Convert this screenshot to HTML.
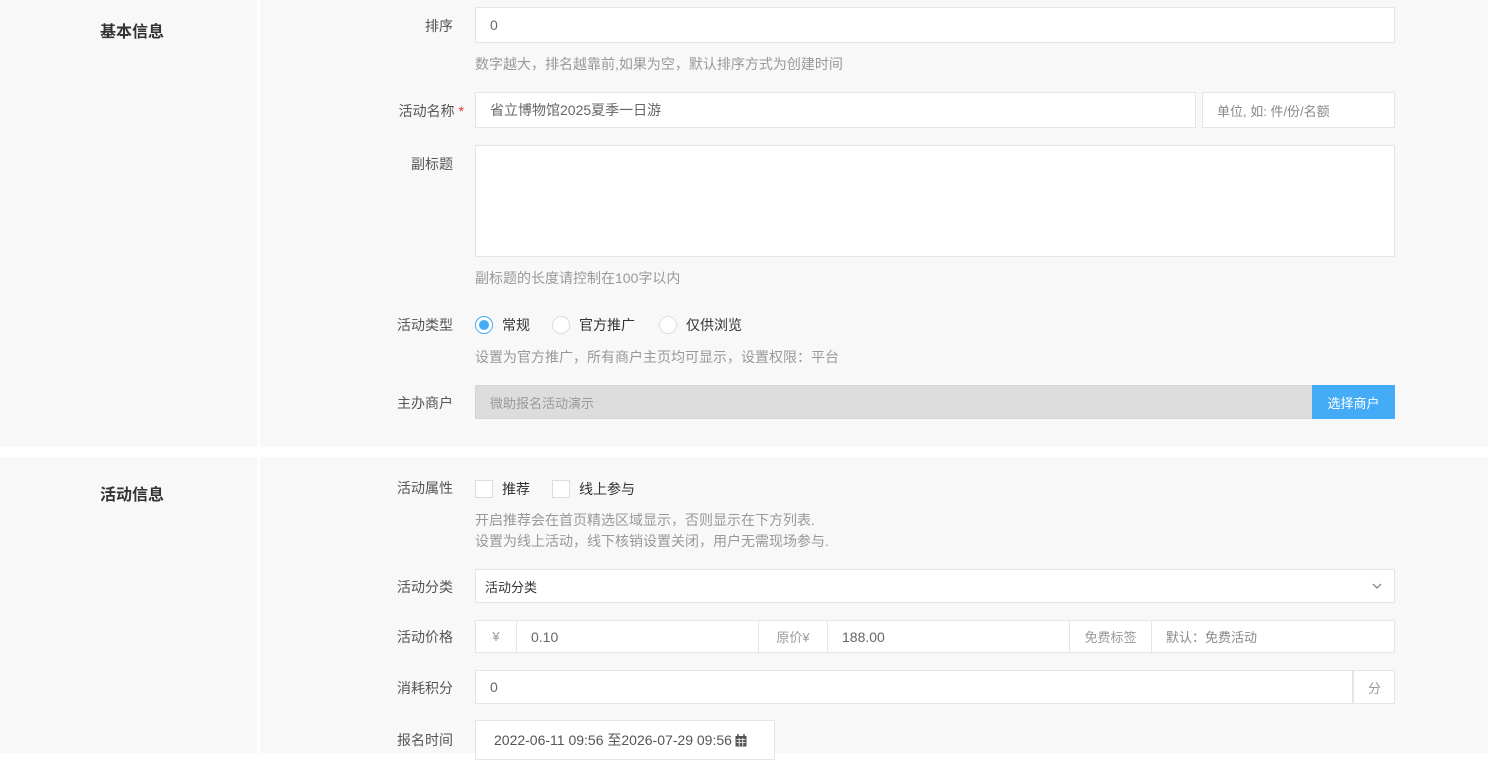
<!DOCTYPE html>
<html><head><meta charset="utf-8"><style>
*{box-sizing:border-box;margin:0;padding:0}
body{width:1488px;height:753px;background:#fff;position:relative;overflow:hidden;font-family:"Liberation Sans","Noto Sans CJK SC",sans-serif;font-size:14px;color:#333}
.a{position:absolute}
.panel{position:absolute;background:#f8f8f8}
.lbl{position:absolute;right:1035px;text-align:right;font-size:14px;color:#555;white-space:nowrap}
.inp{position:absolute;background:#fff;border:1px solid #e5e5e5;color:#666;font-size:14px;padding-left:14px;display:flex;align-items:center}
.help{position:absolute;left:475px;color:#999;font-size:14px;white-space:nowrap}
.h{position:absolute;left:100px;font-size:16px;font-weight:bold;color:#333}
.seg{position:absolute;top:0;height:100%;border-right:1px solid #e5e5e5;display:flex;align-items:center;justify-content:center;color:#999;font-size:13px}
.radio{position:absolute;width:18px;height:18px;border:1px solid #ddd;border-radius:50%;background:#fff}
.cb{position:absolute;width:18px;height:18px;border:1px solid #ddd;background:#fff}
</style></head><body>
<div class="panel" style="left:0;top:0;width:257px;height:447px"></div>
<div class="panel" style="left:260px;top:0;width:1228px;height:447px"></div>
<div class="panel" style="left:0;top:457px;width:257px;height:296px"></div>
<div class="panel" style="left:260px;top:457px;width:1228px;height:296px"></div>

<div class="h" style="top:18px">基本信息</div>
<div class="lbl" style="top:16px">排序</div>
<div class="inp" style="left:475px;top:7px;width:920px;height:36px">0</div>
<div class="help" style="top:54px">数字越大，排名越靠前,如果为空，默认排序方式为创建时间</div>

<div class="lbl" style="top:101px;right:1024px">活动名称 <span style="color:#e33">*</span></div>
<div class="inp" style="left:475px;top:92px;width:721px;height:36px">省立博物馆2025夏季一日游</div>
<div class="inp" style="left:1202px;top:92px;width:193px;height:36px;color:#888;font-size:13px">单位, 如: 件/份/名额</div>

<div class="lbl" style="top:154px">副标题</div>
<div class="inp" style="left:475px;top:145px;width:920px;height:112px"></div>
<div class="help" style="top:268px">副标题的长度请控制在100字以内</div>

<div class="lbl" style="top:315px">活动类型</div>
<div class="radio" style="left:475px;top:316px;border-color:#44abf7"><div style="position:absolute;left:3px;top:3px;width:10px;height:10px;border-radius:50%;background:#44abf7"></div></div>
<div class="a" style="left:502px;top:315px;color:#333">常规</div>
<div class="radio" style="left:552px;top:316px"></div>
<div class="a" style="left:579px;top:315px;color:#333">官方推广</div>
<div class="radio" style="left:659px;top:316px"></div>
<div class="a" style="left:686px;top:315px;color:#333">仅供浏览</div>
<div class="help" style="top:347px">设置为官方推广，所有商户主页均可显示，设置权限：平台</div>

<div class="lbl" style="top:393px">主办商户</div>
<div class="inp" style="left:475px;top:385px;width:838px;height:34px;background:#ddd;border-color:#d5d5d5;color:#999;font-size:13px">微助报名活动演示</div>
<div class="a" style="left:1312px;top:385px;width:83px;height:34px;background:#44abf7;color:#fff;font-size:13px;display:flex;align-items:center;justify-content:center">选择商户</div>

<div class="h" style="top:481px">活动信息</div>
<div class="lbl" style="top:478px">活动属性</div>
<div class="cb" style="left:475px;top:480px"></div>
<div class="a" style="left:502px;top:479px">推荐</div>
<div class="cb" style="left:552px;top:480px"></div>
<div class="a" style="left:579px;top:479px">线上参与</div>
<div class="help" style="top:510px">开启推荐会在首页精选区域显示，否则显示在下方列表.</div>
<div class="help" style="top:531px">设置为线上活动，线下核销设置关闭，用户无需现场参与.</div>

<div class="lbl" style="top:577px">活动分类</div>
<div class="inp" style="left:475px;top:569px;width:920px;height:34px;padding-left:9px;color:#333;font-size:13px">活动分类<svg class="a" style="right:12px;top:13px" width="10" height="7" viewBox="0 0 10 7"><path d="M1 1l4 4 4-4" fill="none" stroke="#888" stroke-width="1.3"/></svg></div>

<div class="lbl" style="top:627px">活动价格</div>
<div class="inp" style="left:475px;top:620px;width:920px;height:33px;padding:0">
<div class="seg" style="left:0;width:41px">¥</div>
<div class="seg" style="left:41px;width:242px;justify-content:flex-start;padding-left:14px;color:#666;font-size:14px">0.10</div>
<div class="seg" style="left:283px;width:69px">原价¥</div>
<div class="seg" style="left:352px;width:242px;justify-content:flex-start;padding-left:14px;color:#666;font-size:14px">188.00</div>
<div class="seg" style="left:594px;width:82px">免费标签</div>
<div class="seg" style="left:676px;width:243px;border:0;justify-content:flex-start;padding-left:14px;color:#888">默认：免费活动</div>
</div>

<div class="lbl" style="top:678px">消耗积分</div>
<div class="inp" style="left:475px;top:670px;width:920px;height:34px;padding:0">
<div class="seg" style="left:0;width:877px;justify-content:flex-start;padding-left:14px;color:#666;font-size:14px">0</div>
<div class="seg" style="left:877px;width:42px;border:0;border-left:1px solid #e5e5e5">分</div>
</div>

<div class="lbl" style="top:730px">报名时间</div>
<div class="inp" style="left:475px;top:720px;width:300px;height:40px;padding-left:18px;color:#555;font-size:14px">2022-06-11 09:56 至2026-07-29 09:56<svg style="margin-left:3px" width="12" height="13" viewBox="0 0 12 13"><rect x="0.5" y="2" width="11" height="10.5" fill="#555"/><path d="M3 0v3M9 0v3" stroke="#555" stroke-width="1.5"/><path d="M1.5 5.5h9M1.5 8.5h9M4.2 4v8M7.8 4v8" stroke="#fff" stroke-width=".8"/></svg></div>
</body></html>
